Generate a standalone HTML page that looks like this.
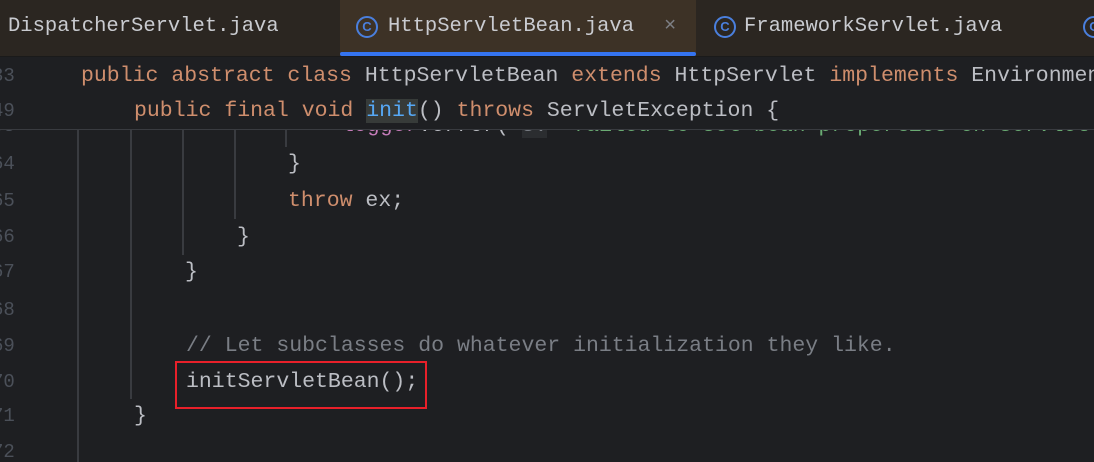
<!DOCTYPE html>
<html><head><style>
html,body{margin:0;width:1094px;height:462px;overflow:hidden}
body{background:#1e1f22;font-family:"Liberation Mono",monospace;position:relative}
.tabs{position:absolute;left:0;top:0;width:1094px;height:56px;background:#2b2621;border-bottom:1px solid #1a1a1a;overflow:hidden}
.tab{position:absolute;top:0;height:56px;line-height:54px;font-size:20.5px;color:#c9cbd0;white-space:pre}
.act{background:#3d3226}
.ul{position:absolute;left:340px;top:52px;width:356px;height:4px;background:#3574f0;border-radius:2px}
.ic{position:absolute;top:16px;width:18px;height:18px;border:2px solid #4a7fdd;border-radius:50%;color:#4a7fdd;font:bold 13px "Liberation Sans",sans-serif;text-align:center;line-height:18px}
.ln{position:absolute;left:-8px;width:40px;color:#4b5059;font-size:19px;height:36px;line-height:36px}
.c{position:absolute;white-space:pre;font-size:21.5px;height:36px;line-height:36px;color:#bcbec4}
.k{color:#cf8e6d}.m{color:#56a8f5}.cm{color:#7a7e85}.p{color:#c77dbb}.s{color:#6aab73}
.g{position:absolute;width:2px;background:#393b40}
.hdr{position:absolute;left:0;top:57px;width:1094px;height:72px;background:#1e1f22;border-bottom:1px solid #393b40;z-index:2;overflow:hidden}
.wrap{position:absolute;left:0;top:0;width:1094px;height:462px;overflow:hidden}
</style></head><body><div class="wrap">
<div class="tabs">
<div class="tab" style="left:8px">DispatcherServlet.java</div>
<div class="tab act" style="left:340px;width:356px"></div>
<div class="ic" style="left:356px">C</div>
<div class="tab" style="left:388px">HttpServletBean.java</div>
<div class="tab" style="left:664px;color:#7d7f84">×</div>
<div class="ic" style="left:714px">C</div>
<div class="tab" style="left:744px">FrameworkServlet.java</div>
<div class="ic" style="left:1083px">C</div>
<div class="ul"></div>
</div>
<div class="hdr">
<div class="ln" style="top:1px">33</div>
<div class="c" style="left:81px;top:1px"><span class="k">public abstract class </span>HttpServletBean <span class="k">extends </span>HttpServlet <span class="k">implements </span>EnvironmentCapable</div>
<div class="ln" style="top:36px">49</div>
<div class="c" style="left:134px;top:36px"><span class="k">public final void </span><span class="m" style="background:#373b39">init</span>() <span class="k">throws </span>ServletException {</div>
</div>
<div class="g" style="left:77px;top:129px;height:333px"></div>
<div class="g" style="left:130px;top:129px;height:270px"></div>
<div class="g" style="left:182px;top:129px;height:126px"></div>
<div class="g" style="left:234px;top:129px;height:90px"></div>
<div class="g" style="left:285px;top:129px;height:18px"></div>
<div class="ln" style="top:108px">63</div>
<div class="c" style="left:341px;top:108px"><span class="p">logger</span>.error( <span class="cm" style="background:#2b2d30">s:</span> <span class="s">"failed to set bean properties on servlet</span></div>
<div class="ln" style="top:146px">64</div><div class="c" style="left:288px;top:146px">}</div>
<div class="ln" style="top:183px">65</div><div class="c" style="left:288px;top:183px"><span class="k">throw </span>ex;</div>
<div class="ln" style="top:219px">66</div><div class="c" style="left:237px;top:219px">}</div>
<div class="ln" style="top:254px">67</div><div class="c" style="left:185px;top:254px">}</div>
<div class="ln" style="top:292px">68</div>
<div class="ln" style="top:328px">69</div><div class="c cm" style="left:186px;top:328px">// Let subclasses do whatever initialization they like.</div>
<div class="ln" style="top:364px">70</div><div class="c" style="left:186px;top:364px">initServletBean();</div>
<div style="position:absolute;left:175px;top:361px;width:252px;height:48px;border:2px solid #e8202a;box-sizing:border-box"></div>
<div class="ln" style="top:398px">71</div><div class="c" style="left:134px;top:398px">}</div>
<div class="ln" style="top:434px">72</div>
</div></body></html>
